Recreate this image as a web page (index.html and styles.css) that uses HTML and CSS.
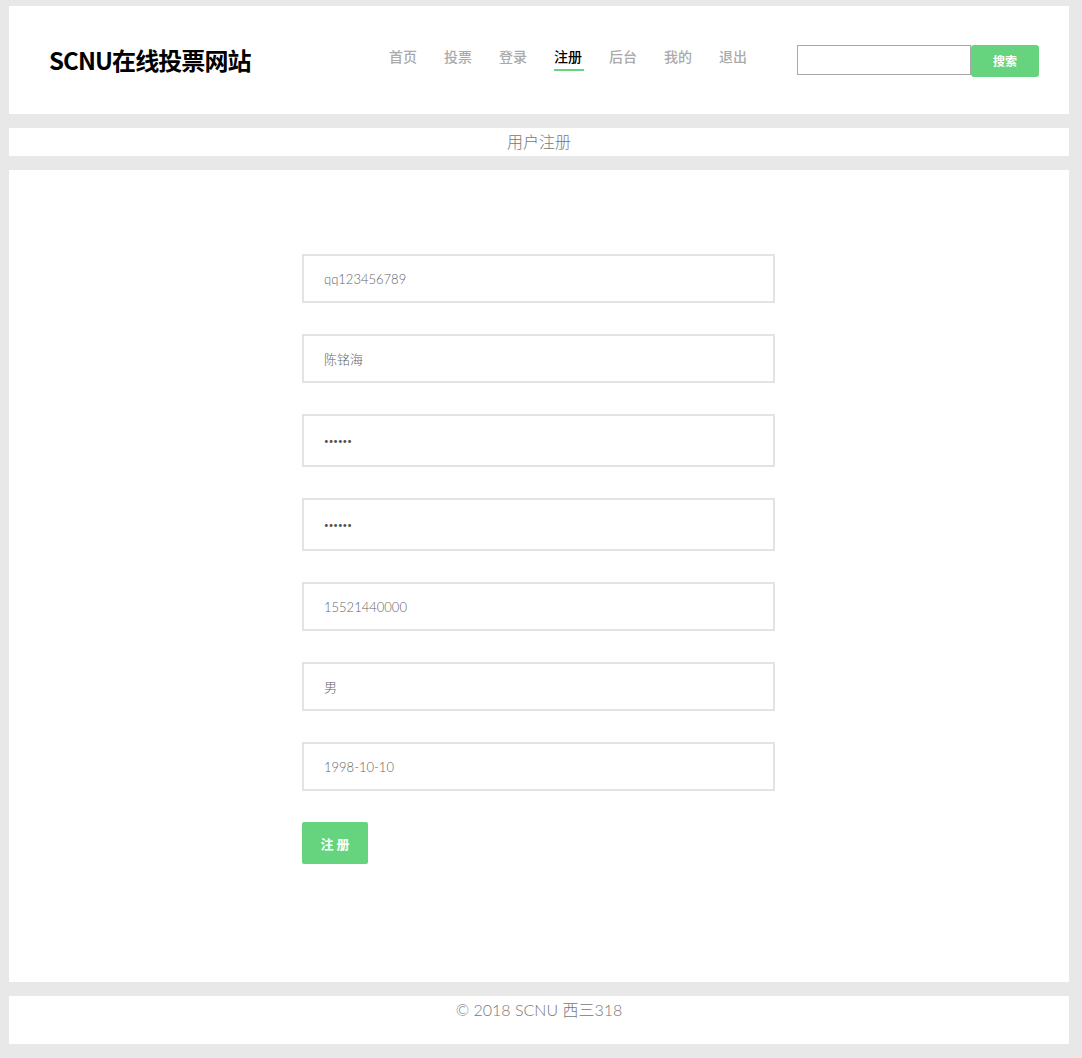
FILE: index.html
```html
<!DOCTYPE html>
<html lang="zh-CN">
<head>
<meta charset="utf-8">
<title>SCNU在线投票网站 - 用户注册</title>
<link rel="stylesheet" href="styles.css">
</head>
<body>
<header class="header">
  <div class="logo">SCNU在线投票网站</div>
  <nav class="nav">
    <a class="nav-item">首页</a>
    <a class="nav-item">投票</a>
    <a class="nav-item">登录</a>
    <a class="nav-item active">注册</a>
    <a class="nav-item">后台</a>
    <a class="nav-item">我的</a>
    <a class="nav-item">退出</a>
  </nav>
  <form class="search">
    <input class="search-input" type="text">
    <button class="search-btn" type="button">搜索</button>
  </form>
</header>
<div class="title-bar">用户注册</div>
<main class="main">
  <form class="reg-form">
    <input class="field" type="text" value="qq123456789" readonly>
    <input class="field" type="text" value="陈铭海" readonly>
    <input class="field pwd" type="password" value="123456" readonly>
    <input class="field pwd" type="password" value="123456" readonly>
    <input class="field" type="text" value="15521440000" readonly>
    <input class="field" type="text" value="男" readonly>
    <input class="field" type="text" value="1998-10-10" readonly>
    <button class="reg-btn" type="button">注 册</button>
  </form>
</main>
<footer class="footer">© 2018 SCNU 西三318</footer>
</body>
</html>
```
FILE: styles.css
```css
html, body {
  margin: 0;
  background: #e8e8e8;
}
body {
  padding: 6px 13px 14px 9px;
  font-family: "Noto Sans CJK SC", "Noto Sans", sans-serif;
  box-sizing: border-box;
  width: 1082px;
}
.header {
  height: 108px;
  background: #fff;
  display: flex;
  align-items: center;
  padding: 0 30px 0 40px;
}
.logo {
  font-size: 24px;
  font-weight: 700;
  color: #000;
  letter-spacing: -0.9px;
  margin-top: -2px;
}
.nav {
  margin-left: auto;
  display: flex;
  gap: 27px;
  margin-top: -9px;
}
.nav-item {
  position: relative;
  font-size: 14px;
  font-weight: 500;
  color: #aaa;
  width: 28px;
  line-height: 20px;
  text-align: center;
  cursor: pointer;
}
.nav-item.active {
  color: #000;
}
.nav-item.active::after {
  content: "";
  position: absolute;
  left: 0;
  right: -2px;
  bottom: -5px;
  height: 2px;
  background: #66d37e;
}
.search {
  display: flex;
  align-items: flex-start;
  margin-left: 50px;
  margin-top: 1px;
}
.search-input {
  width: 174px;
  height: 30px;
  box-sizing: border-box;
  border: 1px solid #a9a9a9;
  margin: 0;
  padding: 0 4px;
}
.search-btn {
  width: 68px;
  height: 32px;
  border: none;
  border-radius: 3px;
  background: #66d47e;
  color: #fff;
  font-family: "Noto Sans CJK SC", sans-serif;
  font-size: 12px;
  font-weight: 700;
  margin: 0;
  padding: 0;
}
.title-bar {
  margin-top: 14px;
  height: 28px;
  background: #fff;
  text-align: center;
  line-height: 28px;
  font-size: 16px;
  font-weight: 300;
  color: #777;
  font-family: "Lato", "Noto Sans CJK SC", sans-serif;
}
.main {
  margin-top: 14px;
  height: 812px;
  background: #fff;
  display: flex;
  justify-content: center;
  box-sizing: border-box;
  padding-top: 84px;
}
.reg-form {
  width: 473px;
  margin-left: -1px;
  display: flex;
  flex-direction: column;
  align-items: flex-start;
  gap: 31px;
}
.field {
  width: 473px;
  height: 49px;
  box-sizing: border-box;
  border: 2px solid #e3e3e3;
  margin: 0;
  padding: 0 20px;
  font-family: "Lato", "Noto Sans CJK SC", sans-serif;
  font-size: 13px;
  font-weight: 300;
  color: #666;
  background: #fff;
  outline: none;
}
.field.pwd {
  height: 53px;
  color: #555;
  font-size: 8px;
  font-weight: 400;
}
.reg-btn {
  width: 66px;
  height: 42px;
  border: none;
  border-radius: 2px;
  background: #66d47e;
  color: #fff;
  font-family: "Noto Sans CJK SC", sans-serif;
  font-size: 13px;
  font-weight: 700;
  margin: 0;
  padding: 0;
}
.footer {
  margin-top: 14px;
  height: 48px;
  background: #fff;
  text-align: center;
  font-size: 16px;
  font-weight: 300;
  line-height: 28px;
  color: #777;
  font-family: "Lato", "Noto Sans CJK SC", sans-serif;
}
```
